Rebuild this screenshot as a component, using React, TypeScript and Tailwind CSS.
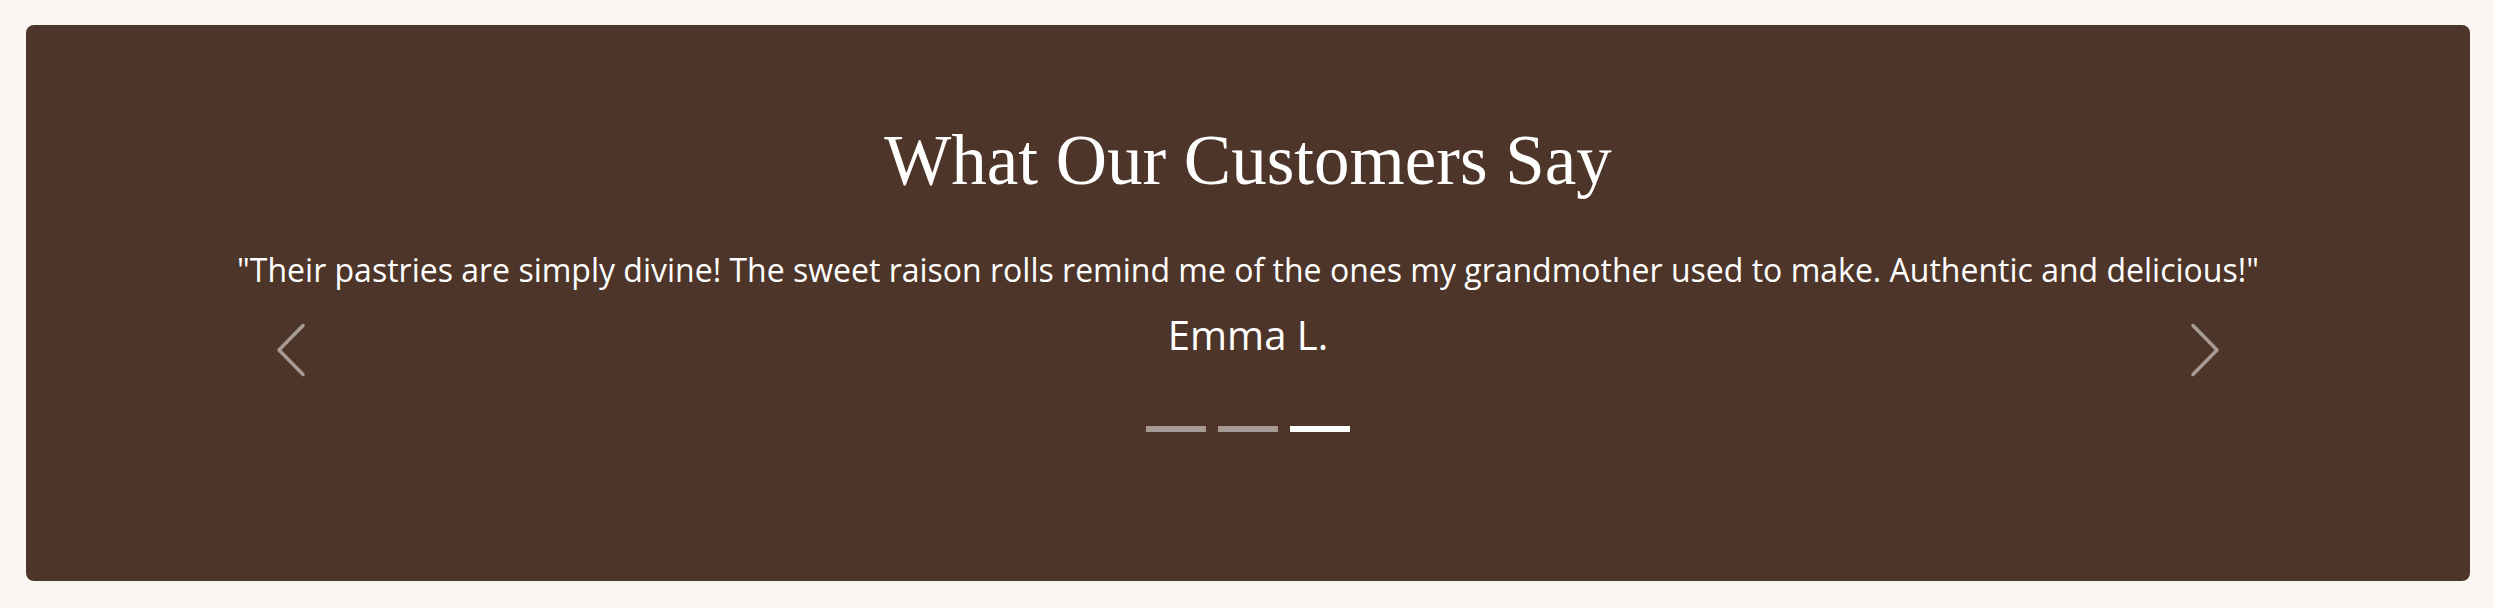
import React, { useState } from 'react';

const testimonials = [
    { quote: 'Best bakery in town! The croissants are flaky and buttery, just like in Paris.', name: 'Sarah M.' },
    { quote: 'I order their birthday cakes every year. Beautiful, fresh and never too sweet.', name: 'David K.' },
    {
        quote: '"Their pastries are simply divine! The sweet raison rolls remind me of the ones my grandmother used to make. Authentic and delicious!"',
        name: 'Emma L.',
    },
];

const Chevron: React.FC<{ dir: 'left' | 'right' }> = ({ dir }) => (
    <svg width="30" height="54" viewBox="0 0 30 54" fill="none" stroke="currentColor" strokeWidth="3.5" strokeLinecap="round" strokeLinejoin="round">
        {dir === 'left' ? <polyline points="27,2.5 3,27 27,51.5" /> : <polyline points="3,2.5 27,27 3,51.5" />}
    </svg>
);

export default function App() {
    const [active, setActive] = useState(2);
    const item = testimonials[active];

    return (
        <div className="min-h-[608px] bg-[#f9f5f0] pt-[25px] pl-[26px] pr-[24px]">
            {/* Testimonials card */}
            <section className="relative h-[556px] rounded-lg bg-[#4e3529] pt-[100px] text-white">
                <h2 className="text-center text-[71px] leading-none" style={{ fontFamily: '"Liberation Serif", "Times New Roman", serif' }}>
                    What Our Customers Say
                </h2>

                <div className="mt-[58px] flex flex-col items-center" style={{ fontFamily: '"Open Sans", "Noto Sans", sans-serif' }}>
                    <p className="text-center text-[32px] leading-none">{item.quote}</p>
                    <p className="mt-[29px] text-[40px] leading-none">{item.name}</p>

                    {/* Dots */}
                    <div className="mt-[71px] flex gap-3">
                        {testimonials.map((_, i) => (
                            <button
                                key={i}
                                onClick={() => setActive(i)}
                                aria-label={`Show testimonial ${i + 1}`}
                                className={`h-[6px] w-[60px] ${i === active ? 'bg-white' : 'bg-white/50'}`}
                            />
                        ))}
                    </div>
                </div>

                {/* Arrows */}
                <button
                    onClick={() => setActive((active + 2) % 3)}
                    aria-label="Previous testimonial"
                    className="absolute left-[250px] top-[298px] text-white/50"
                >
                    <Chevron dir="left" />
                </button>
                <button
                    onClick={() => setActive((active + 1) % 3)}
                    aria-label="Next testimonial"
                    className="absolute right-[250px] top-[298px] text-white/50"
                >
                    <Chevron dir="right" />
                </button>
            </section>
        </div>
    );
}
